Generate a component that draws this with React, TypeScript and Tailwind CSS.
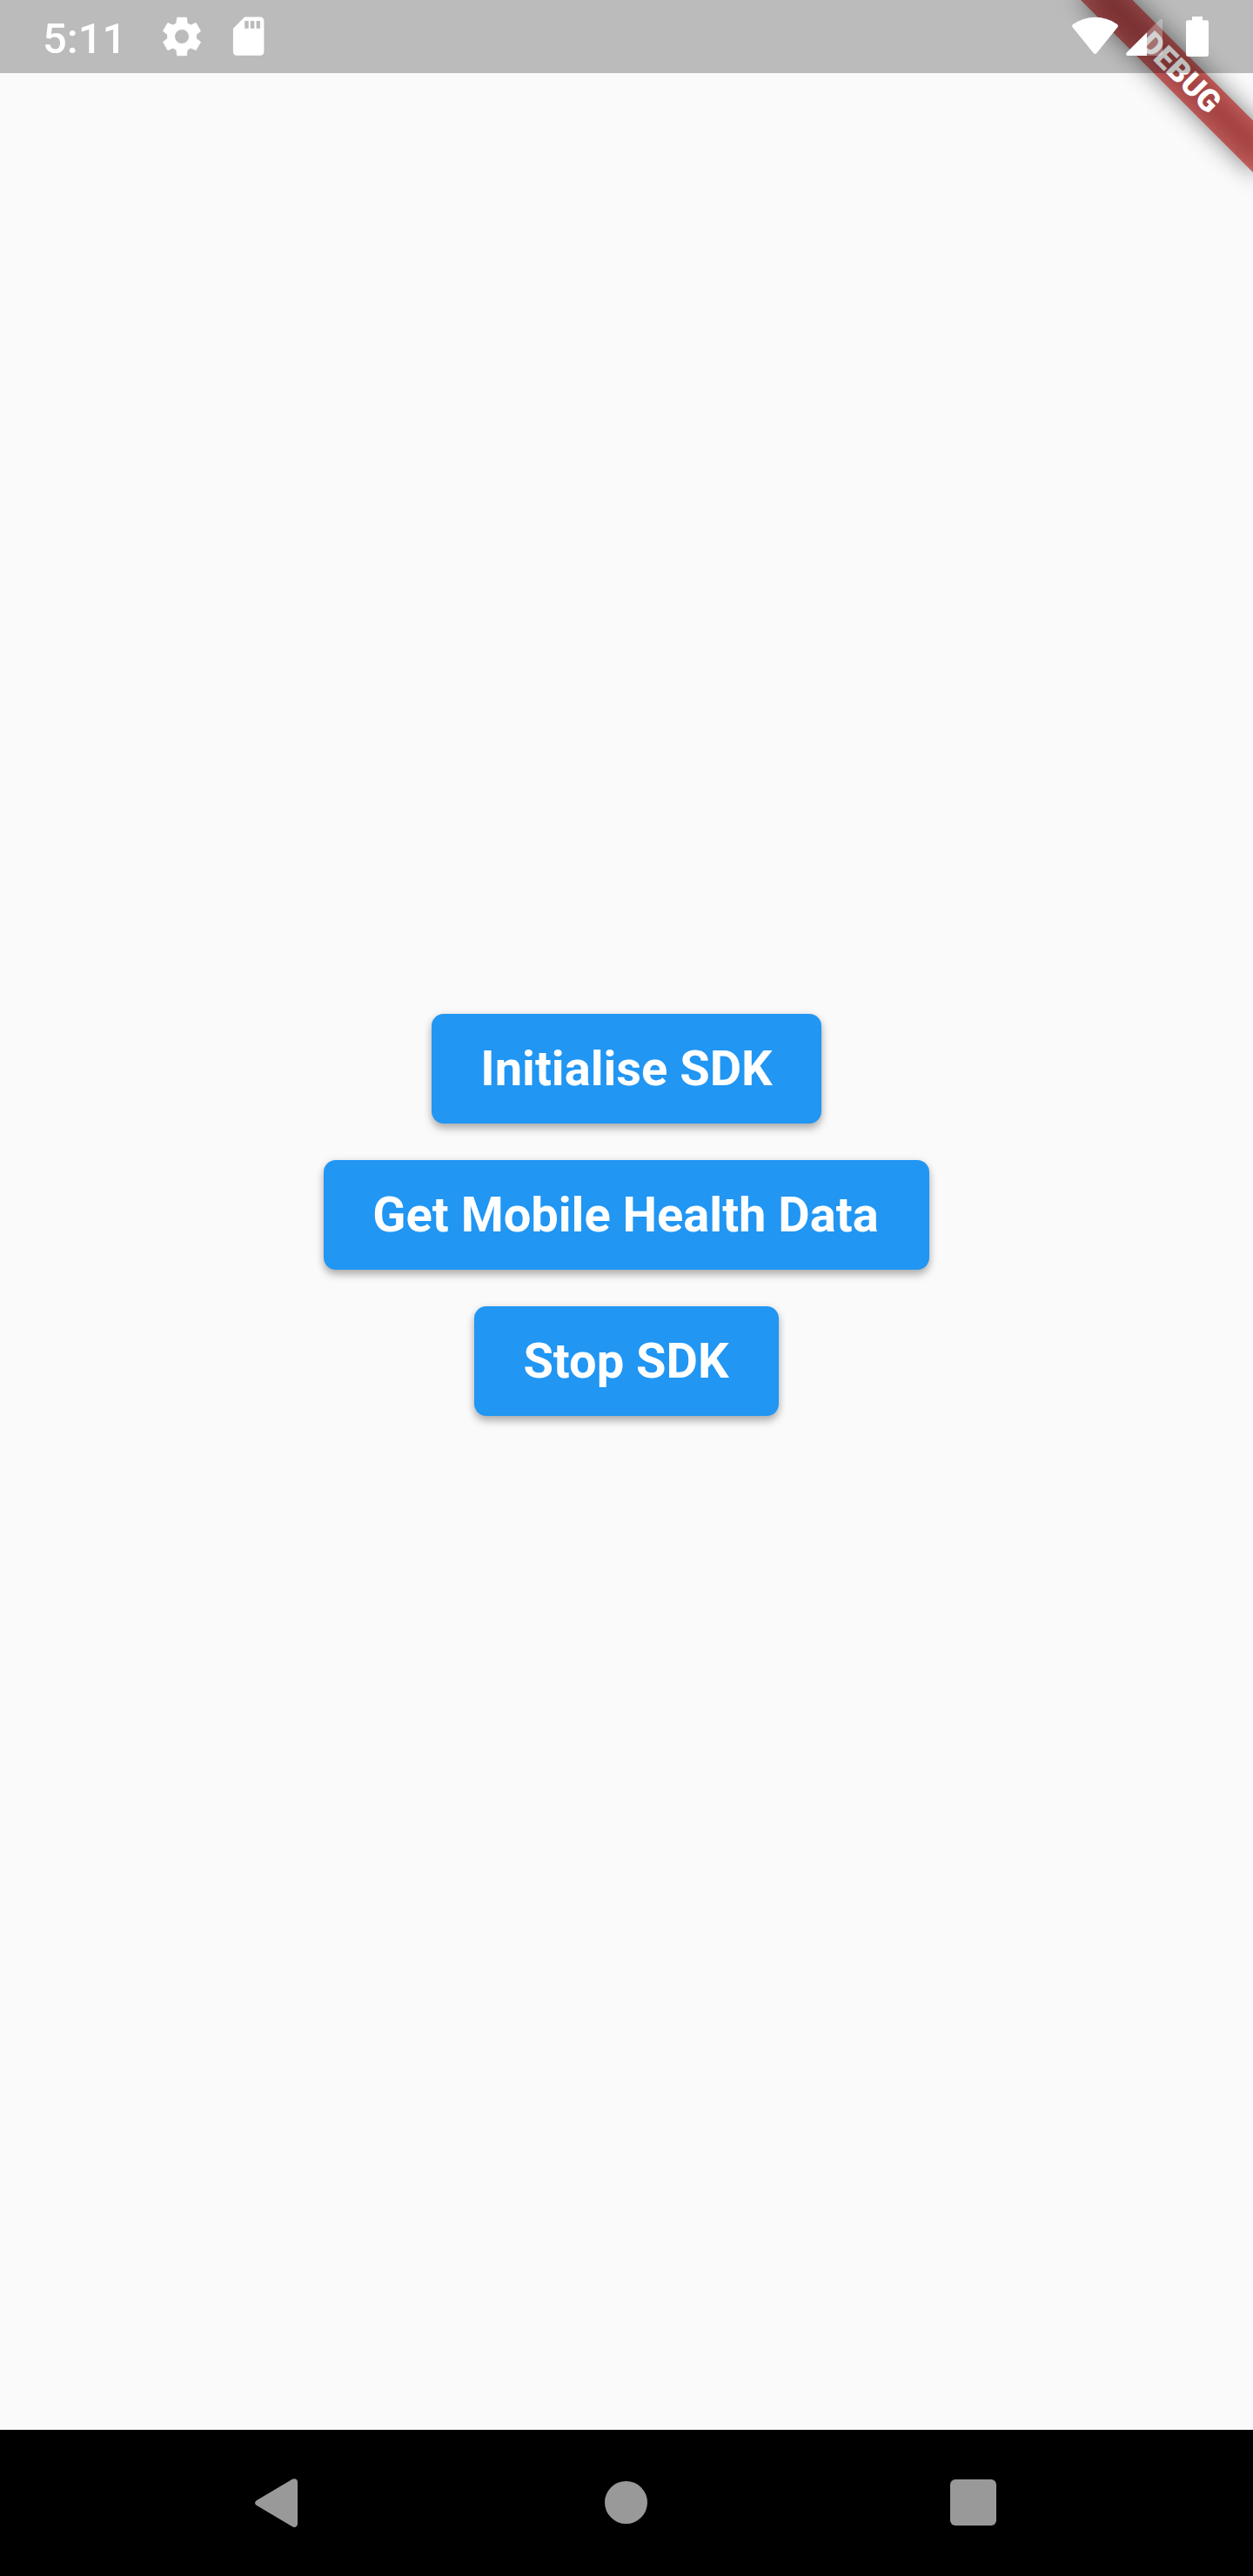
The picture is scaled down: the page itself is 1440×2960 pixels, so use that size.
import { MdSdCard } from "react-icons/md";

const actions = [
  { label: "Initialise SDK", size: "w-[448px]" },
  { label: "Get Mobile Health Data", size: "w-[696px] pr-[2px]" },
  { label: "Stop SDK", size: "w-[350px] pr-px" },
];

function DebugBanner() {
  return (
    <div className="pointer-events-none absolute top-[98px] right-[-140px] h-[42px] w-[280px] origin-[140px_-98px] rotate-45">
      <div className="absolute inset-0 bg-black/50 blur-[13.9px]" />
      <div className="absolute inset-0 flex items-center justify-center bg-[#b71c1c]/63 text-[35.7px] leading-none font-black text-white">
        DEBUG
      </div>
    </div>
  );
}

function GearIcon() {
  return (
    <svg width="46" height="46" viewBox="-23 -23 46 46" fill="currentColor" stroke="currentColor" strokeLinejoin="round">
      <path
        fillRule="evenodd"
        transform="scale(.975)"
        d="M-5.500-22.300H5.500L6.300-15.700L10.450-13.300L16.550-15.900L22.050-6.400L16.750-2.400V2.400L22.050 6.400L16.550 15.900L10.450 13.300L6.300 15.700L5.500 22.300H-5.500L-6.300 15.700L-10.450 13.300L-16.550 15.900L-22.050 6.400L-16.750 2.400V-2.400L-22.050-6.400L-16.550-15.900L-10.450-13.300L-6.300-15.700ZM0-8.700A8.700 8.700 0 1 0 0 8.700A8.700 8.700 0 1 0 0-8.700Z"
      />
    </svg>
  );
}

function StatusBar() {
  return (
    <header className="relative flex h-[84px] items-center justify-between bg-black/25 text-white">
      <div className="flex items-center pl-[49px]">
        <span className="w-[137.400px] pt-[5px] text-[49px] leading-none font-medium">5:11</span>
        <GearIcon />
        <MdSdCard className="ml-[27px] size-[53.300px]" />
      </div>
      <svg width="160" height="84" viewBox="0 0 160 84" className="mr-[50px]" fill="currentColor">
        <path d="M2.800 31.500Q1 29 3.700 27.400Q28.500 12 53.300 27.400Q56 29 54.200 31.500L30.700 60.600Q28.500 63.300 26.300 60.600Z" />
        <path d="M106 24.500V61Q106 64 103 64H88V37.300L102.300 23Q103.600 21.800 104.800 22Q106 22.300 106 24.500Z" opacity="0.3" />
        <path d="M88 37.300V64H66Q62.500 63.500 65 60.300Z" />
        <path d="M140 19h12v4.300h4.700q2.300 0 2.300 2.300v37q0 2.300-2.300 2.300h-21.400q-2.300 0-2.300-2.300v-37q0-2.300 2.300-2.300h4.700z" />
      </svg>
    </header>
  );
}

function NavigationBar() {
  return (
    <nav className="flex h-[168px] items-center justify-between bg-black pr-[295px] pb-px pl-[293px] text-[#999]">
      <svg width="49" height="56" viewBox="0 0 49 56" fill="currentColor">
        <path d="M1.700 25.200L43 .8C46-.8 49 1 49 4.200V52C49 55.200 46 57 43 55.200L1.700 30.800Q-1.700 28 1.700 25.200Z" />
      </svg>
      <div className="ml-[5px] size-[49px] rounded-full bg-[#999]" />
      <div className="size-[53px] rounded-[6px] bg-[#999]" />
    </nav>
  );
}

export default function App() {
  return (
    <div className="relative flex h-[2960px] w-[1440px] flex-col overflow-hidden bg-[#fafafa] font-[Roboto,sans-serif]">
      <DebugBanner />
      <StatusBar />
      <main className="flex flex-1 flex-col items-center justify-center gap-[42px] pb-[84px]">
        {actions.map(({ label, size }) => (
          <button
            key={label}
            className={`${size} h-[126px] rounded-[14px] bg-[#2196f3] text-[56px] leading-none font-bold whitespace-nowrap text-white shadow-[0_6px_10px_rgba(0,0,0,0.26),0_1px_10px_rgba(0,0,0,0.1)]`}
          >
            {label}
          </button>
        ))}
      </main>
      <NavigationBar />
    </div>
  );
}
